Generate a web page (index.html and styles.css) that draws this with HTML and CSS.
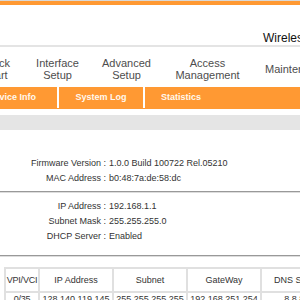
FILE: index.html
```html
<!DOCTYPE html>
<html>
<head>
<meta charset="utf-8">
<link rel="stylesheet" href="styles.css">
</head>
<body>
<div class="page">
  <div class="topbar"></div>
  <div class="header">
    <div class="brand">Wireless ADSL2+ Router</div>
  </div>
  <div class="nav">
    <div class="nav-item w-quick">Quick<br>Start</div>
    <div class="nav-item w-iface">Interface<br>Setup</div>
    <div class="nav-item w-adv">Advanced<br>Setup</div>
    <div class="nav-item w-access">Access<br>Management</div>
    <div class="nav-item w-maint">Maintenance</div>
  </div>
  <div class="subnav">
    <div class="sub-item s-dev">Device Info</div>
    <div class="sep"></div>
    <div class="sub-item s-log">System Log</div>
    <div class="sep"></div>
    <div class="sub-item s-stat">Statistics</div>
  </div>
  <div class="strip"></div>
  <div class="info">
    <div class="row"><span class="lbl">Firmware Version :</span><span class="val">1.0.0 Build 100722 Rel.05210</span></div>
    <div class="row"><span class="lbl">MAC Address :</span><span class="val">b0:48:7a:de:58:dc</span></div>
  </div>
  <div class="rule"></div>
  <div class="info info2">
    <div class="row"><span class="lbl">IP Address :</span><span class="val">192.168.1.1</span></div>
    <div class="row"><span class="lbl">Subnet Mask :</span><span class="val">255.255.255.0</span></div>
    <div class="row"><span class="lbl">DHCP Server :</span><span class="val">Enabled</span></div>
  </div>
  <div class="rule rule2"></div>
  <div class="wan">
    <div class="cell c-vpi">VPI/VCI</div>
    <div class="cell">IP Address</div>
    <div class="cell">Subnet</div>
    <div class="cell">GateWay</div>
    <div class="cell">DNS Server</div>
    <div class="cell c-vpi">0/35</div>
    <div class="cell">128.140.119.145</div>
    <div class="cell">255.255.255.255</div>
    <div class="cell">192.168.251.254</div>
    <div class="cell">8.8.8.8</div>
  </div>
</div>
</body>
</html>
```
FILE: styles.css
```css
html, body {
  margin: 0;
  padding: 0;
  overflow: hidden;
  background: #fff;
}
body {
  width: 300px;
  height: 300px;
  font-family: "Liberation Sans", Arial, sans-serif;
}
.page {
  width: 300px;
}
.topbar {
  height: 4px;
  border-top: 1px solid #d8d8d8;
  background: #ff9933;
}
.header {
  height: 40px;
  display: flex;
  align-items: flex-start;
  padding-left: 263px;
  border-bottom: 2px solid #e4e4e4;
  white-space: nowrap;
}
.brand {
  margin-top: 26px;
  font-size: 12px;
  color: #111;
}
.nav {
  height: 40px;
  display: flex;
  align-items: center;
  padding-top: 4px;
  box-sizing: border-box;
  margin-left: -36px;
  white-space: nowrap;
}
.nav-item {
  flex: none;
  text-align: center;
  font-size: 11px;
  line-height: 12px;
  color: #4d4d4d;
}
.w-quick { width: 64px; }
.w-iface { width: 59px; }
.w-adv { width: 79px; }
.w-access { width: 83px; }
.w-maint { width: 102px; text-align: left; padding-left: 16px; box-sizing: border-box; }
.subnav {
  height: 22px;
  background: #ff9933;
  display: flex;
  align-items: stretch;
  margin-left: -33px;
  white-space: nowrap;
}
.sub-item {
  flex: none;
  font-size: 9px;
  font-weight: bold;
  color: #fff8ee;
  line-height: 21px;
  text-align: center;
}
.s-dev { width: 90px; }
.s-log { width: 84px; }
.s-stat { padding-left: 16px; text-align: left; }
.sep {
  width: 2px;
  background: #fff;
  margin-bottom: 1px;
  flex: none;
}
.strip {
  height: 15px;
  margin-top: 6px;
  background: #e5e5e5;
}
.info {
  padding-top: 26px;
  padding-bottom: 5px;
}
.info2 {
  padding-top: 6px;
  padding-bottom: 11px;
}
.row {
  display: flex;
  font-size: 9px;
  line-height: 15px;
  color: #333;
  white-space: nowrap;
}
.lbl {
  width: 106px;
  text-align: right;
  flex: none;
}
.val {
  padding-left: 3px;
}
.rule {
  height: 1px;
  background: #999;
  border-bottom: 1px solid #ddd;
}
.rule2 {
  margin-bottom: 10px;
}
.wan {
  display: grid;
  grid-template-columns: 34px 74px 74px 74px 74px;
  grid-template-rows: 24px 14px;
  margin-left: 4px;
  border-top: 2px solid #e0e0e0;
  border-left: 2px solid #e0e0e0;
  font-size: 9px;
  color: #333;
  white-space: nowrap;
}
.cell {
  border-right: 2px solid #e0e0e0;
  border-bottom: 2px solid #e0e0e0;
  display: flex;
  align-items: center;
  justify-content: center;
  min-width: 0;
}
.c-vpi {
  letter-spacing: -0.2px;
}
```
